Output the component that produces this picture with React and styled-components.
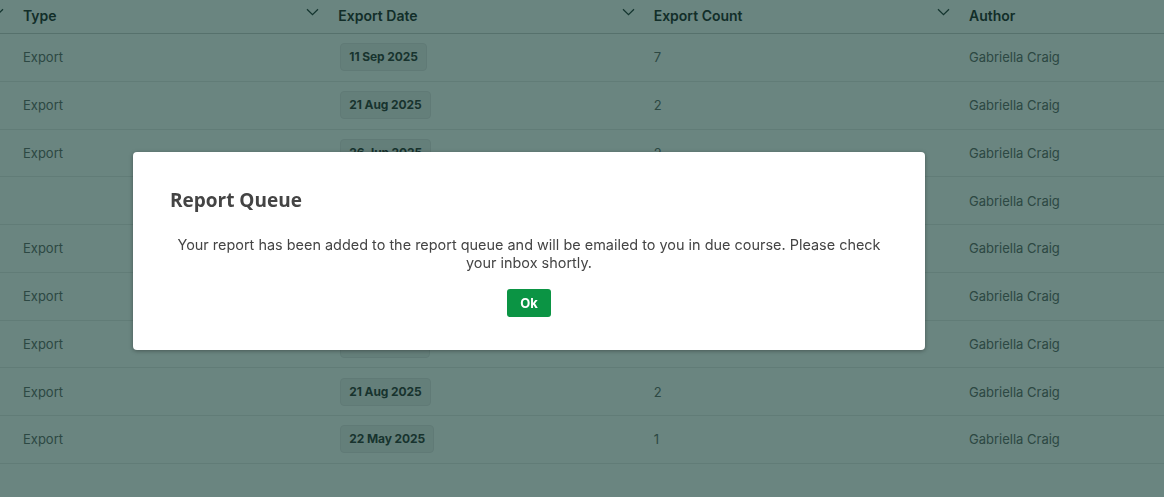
import React from "react";
import styled, { createGlobalStyle } from "styled-components";

const GlobalStyle = createGlobalStyle`
  html, body { margin: 0; padding: 0; background: #ffffff; }
  body { font-family: Inter, "Noto Sans", sans-serif; overflow: hidden; }
  * { box-sizing: border-box; }
`;

const Page = styled.div`
  width: 1164px;
  height: 497px;
  overflow: hidden;
  background: #ffffff;
`;

const Table = styled.div`
  display: flex;
  flex-direction: column;
  width: max-content;
`;

const HeaderRow = styled.div`
  display: flex;
  height: 34px;
  border-bottom: 1px solid #cccccc;
`;

const Row = styled.div`
  display: flex;
  height: 47.75px;
  border-bottom: 1px solid #e8e8e8;
  align-items: center;
`;

const HeadCell = styled.div`
  width: ${(p) => p.$w}px;
  flex: none;
  display: flex;
  align-items: center;
  justify-content: ${(p) => (p.$ghost ? "flex-end" : "space-between")};
  padding: 0 4px 3px ${(p) => (p.$ghost ? 0 : 15)}px;
  margin-left: ${(p) => p.$offset || 0}px;
  font-size: 14px;
  font-weight: 600;
  color: #262626;
  height: 100%;
`;

const Cell = styled.div`
  width: ${(p) => p.$w}px;
  flex: none;
  padding-left: 15px;
  margin-left: ${(p) => p.$offset || 0}px;
  font-size: 13px;
  color: #666666;
  display: flex;
  align-items: center;
`;

const Chevron = styled.svg`
  width: 13px;
  height: 8px;
  margin-top: -6px;
  flex: none;
`;

const DatePill = styled.span`
  display: inline-block;
  background: #f1eff0;
  border: 1px solid #e6e4e5;
  border-radius: 4px;
  padding: 6px 8px 6px 8px;
  margin-left: 2px;
  font-size: 12px;
  font-weight: 700;
  letter-spacing: -0.1px;
  color: #333333;
  line-height: 14px;
`;

const Overlay = styled.div`
  position: fixed;
  inset: 0;
  background: rgba(7, 52, 43, 0.6);
  display: flex;
  align-items: flex-start;
  padding: 152px 0 0 133px;
`;

const Modal = styled.div`
  width: 792px;
  height: 198px;
  background: #ffffff;
  border-radius: 4px;
  box-shadow: 0 1px 4px rgba(0, 0, 0, 0.35);
  padding: 35px 37px 0 37px;
  display: flex;
  flex-direction: column;
`;

const Title = styled.h2`
  margin: 0;
  font-family: "Open Sans", Lato, sans-serif;
  font-weight: 700;
  font-size: 19px;
  line-height: 26px;
  color: #444444;
`;

const Message = styled.p`
  margin: 23px 0 0 0;
  text-align: center;
  font-family: Inter, sans-serif;
  font-size: 14.45px;
  line-height: 18px;
  color: #444444;
  padding: 0 2px;
`;

const Actions = styled.div`
  display: flex;
  justify-content: center;
  margin-top: 17px;
`;

const OkButton = styled.button`
  width: 44px;
  height: 28px;
  border: none;
  border-radius: 3px;
  background: #0b9444;
  color: #ffffff;
  font-family: Inter, sans-serif;
  font-weight: 700;
  font-size: 13px;
  cursor: pointer;
  padding: 0;
`;

const ChevronIcon = () => (
  <Chevron viewBox="0 0 13 8" fill="none">
    <path d="M1 1.2 L6.5 6.6 L12 1.2" stroke="#2a3a37" strokeWidth="1.3" />
  </Chevron>
);

const COL = 315.33;
const columns = ["Type", "Export Date", "Export Count", "Author"];

const rows = [
  { type: "Export", date: "11 Sep 2025", count: "7" },
  { type: "Export", date: "21 Aug 2025", count: "2" },
  { type: "Export", date: "26 Jun 2025", count: "2" },
  { type: "", date: "", count: "" },
  { type: "Export", date: "14 May 2025", count: "3" },
  { type: "Export", date: "02 Apr 2025", count: "1" },
  { type: "Export", date: "19 Mar 2025", count: "4" },
  { type: "Export", date: "21 Aug 2025", count: "2" },
  { type: "Export", date: "22 May 2025", count: "1" },
];

export default function App() {
  return (
    <>
      <GlobalStyle />
      <Page>
        <Table>
          <HeaderRow>
            <HeadCell $w={20} $offset={-12} $ghost>
              <ChevronIcon />
            </HeadCell>
            {columns.map((c, i) => (
              <HeadCell key={c} $w={COL}>
                <span>{c}</span>
                {i < columns.length - 1 && <ChevronIcon />}
              </HeadCell>
            ))}
          </HeaderRow>
          {rows.map((r, i) => (
            <Row key={i}>
              <Cell $w={20} $offset={-12} />
              <Cell $w={COL}>{r.type}</Cell>
              <Cell $w={COL}>{r.date && <DatePill>{r.date}</DatePill>}</Cell>
              <Cell $w={COL}>{r.count}</Cell>
              <Cell $w={COL}>Gabriella Craig</Cell>
            </Row>
          ))}
        </Table>
      </Page>
      <Overlay>
        <Modal role="dialog">
          <Title>Report Queue</Title>
          <Message>
            Your report has been added to the report queue and will be emailed to you in due course. Please check
            your inbox shortly.
          </Message>
          <Actions>
            <OkButton>Ok</OkButton>
          </Actions>
        </Modal>
      </Overlay>
    </>
  );
}
